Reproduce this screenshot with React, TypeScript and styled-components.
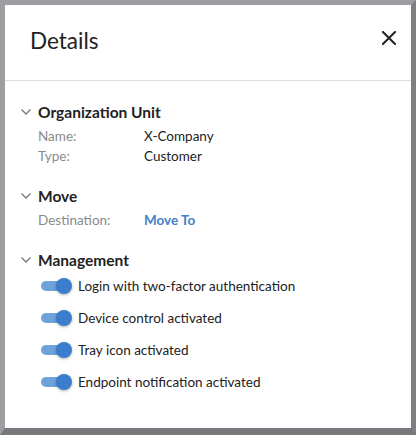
import styled, { createGlobalStyle } from "styled-components";

const GlobalStyle = createGlobalStyle`
  html, body {
    margin: 0;
    padding: 0;
    background: #ffffff;
  }
  body {
    font-family: "Lato", "Liberation Sans", sans-serif;
    color: #222;
  }
`;

const fields = [
  { label: "Name:", value: "X-Company" },
  { label: "Type:", value: "Customer" },
];

const switches = [
  "Login with two-factor authentication",
  "Device control activated",
  "Tray icon activated",
  "Endpoint notification activated",
];

export default function App() {
  return (
    <>
      <GlobalStyle />
      <Panel>
        <Header>
          <Title>Details</Title>
          <CloseButton aria-label="Close">
            <svg width="14" height="14" viewBox="0 0 14 14">
              <path d="M1 1L13 13M13 1L1 13" stroke="#222" strokeWidth="2" strokeLinecap="square" />
            </svg>
          </CloseButton>
        </Header>
        <Body>
          <Section>
            <SectionHead>
              <Chevron />
              Organization Unit
            </SectionHead>
            <Fields>
              {fields.map((f) => (
                <Field key={f.label}>
                  <FieldLabel>{f.label}</FieldLabel>
                  <FieldValue>{f.value}</FieldValue>
                </Field>
              ))}
            </Fields>
          </Section>

          <Section>
            <SectionHead>
              <Chevron />
              Move
            </SectionHead>
            <Fields>
              <Field>
                <FieldLabel>Destination:</FieldLabel>
                <FieldValue $link>Move To</FieldValue>
              </Field>
            </Fields>
          </Section>

          <Section>
            <SectionHead>
              <Chevron />
              Management
            </SectionHead>
            <Toggles>
              {switches.map((s) => (
                <ToggleRow key={s}>
                  <Switch $on>
                    <Knob />
                  </Switch>
                  <ToggleLabel>{s}</ToggleLabel>
                </ToggleRow>
              ))}
            </Toggles>
          </Section>
        </Body>
      </Panel>
    </>
  );
}

function Chevron() {
  return (
    <ChevronIcon width="10" height="6" viewBox="0 0 10 6">
      <path d="M0.5 0.5L5 5L9.5 0.5" fill="none" stroke="#777" strokeWidth="1.3" />
    </ChevronIcon>
  );
}

const Panel = styled.div`
  width: 416px;
  height: 435px;
  box-sizing: border-box;
  background: #fff;
  border-style: solid;
  border-width: 5px 5px 7px 5px;
  border-color: #9c9ea2 #7d7f84 #76787c #9c9ea2;
  display: flex;
  flex-direction: column;
`;

const Header = styled.div`
  display: flex;
  justify-content: space-between;
  align-items: flex-start;
  height: 76px;
  box-sizing: border-box;
  padding: 21px 10px 0 25px;
  border-bottom: 1px solid #dedede;
`;

const Title = styled.h1`
  margin: 0;
  font-size: 22.5px;
  font-weight: 400;
  line-height: 30px;
  color: #222;
`;

const CloseButton = styled.button`
  width: 24px;
  height: 24px;
  padding: 0;
  border: none;
  background: none;
  display: flex;
  align-items: center;
  justify-content: center;
  cursor: pointer;
`;

const Body = styled.div`
  padding: 21px 0 0 16px;
  display: flex;
  flex-direction: column;
  gap: 20px;
`;

const Section = styled.section`
  display: flex;
  flex-direction: column;
`;

const SectionHead = styled.div`
  display: flex;
  align-items: center;
  gap: 7px;
  height: 20px;
  font-size: 15.5px;
  font-weight: 700;
  color: #222;
`;

const ChevronIcon = styled.svg`
  flex: none;
`;

const Fields = styled.div`
  margin: 4px 0 0 17px;
  display: flex;
  flex-direction: column;
`;

const Field = styled.div`
  display: flex;
  line-height: 20px;
  font-size: 13.5px;
`;

const FieldLabel = styled.span`
  width: 106px;
  color: #8a8a8a;
`;

const FieldValue = styled.span<{ $link?: boolean }>`
  color: ${(p) => (p.$link ? "#4680c6" : "#222")};
  font-weight: ${(p) => (p.$link ? 700 : 400)};
`;

const Toggles = styled.div`
  margin-left: 20px;
  display: flex;
  flex-direction: column;
`;

const ToggleRow = styled.div`
  display: flex;
  align-items: center;
  gap: 6px;
  height: 32px;
`;

const Switch = styled.div<{ $on?: boolean }>`
  position: relative;
  width: 31px;
  height: 16px;
  flex: none;
  &::before {
    content: "";
    position: absolute;
    left: 0;
    top: 3px;
    width: 26px;
    height: 10px;
    border-radius: 5px;
    background: ${(p) => (p.$on ? "#6fa2da" : "#bbb")};
  }
`;

const Knob = styled.span`
  position: absolute;
  right: 0;
  top: 0;
  width: 16px;
  height: 16px;
  border-radius: 50%;
  background: #3c7ecd;
  box-shadow: 0 1px 3px rgba(0, 0, 0, 0.3);
`;

const ToggleLabel = styled.span`
  font-size: 13.5px;
  color: #222;
`;
